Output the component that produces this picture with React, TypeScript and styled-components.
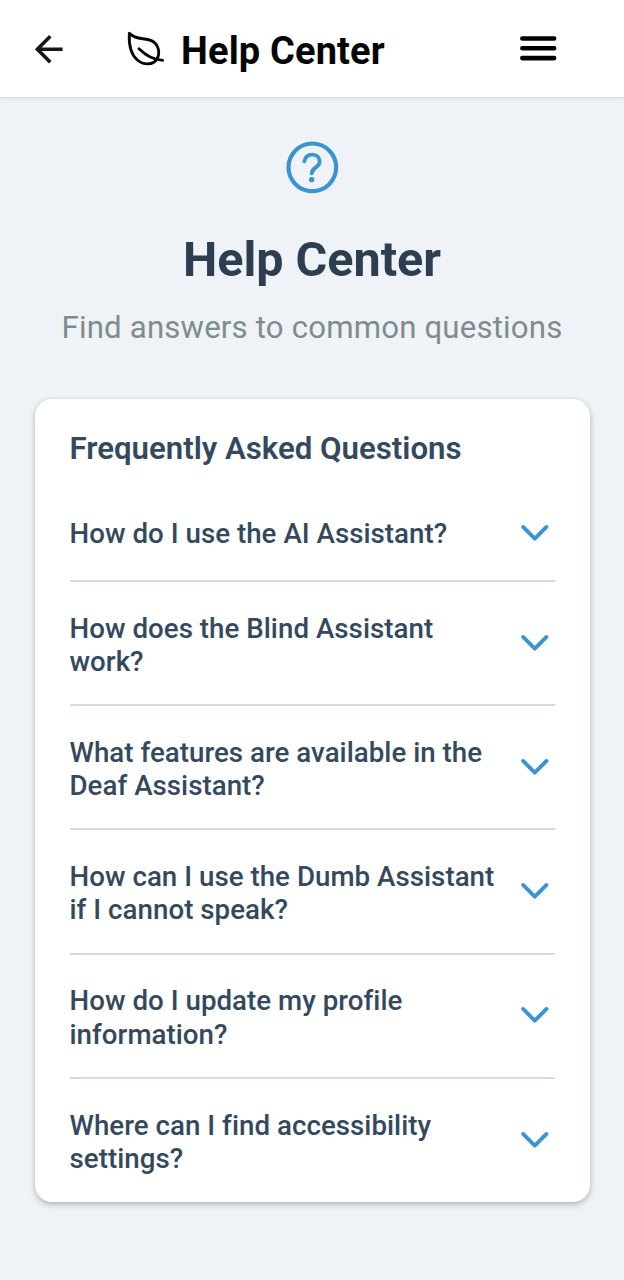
import React from "react";
import styled, { createGlobalStyle } from "styled-components";
import { IoChevronDown, IoMenu } from "react-icons/io5";

const GlobalStyle = createGlobalStyle`
  * { box-sizing: border-box; }
  body {
    margin: 0;
    background: #eff3f8;
    font-family: Roboto, "Liberation Sans", sans-serif;
  }
  h1, h2, p { margin: 0; }
  button { border: 0; padding: 0; background: none; font: inherit; color: inherit; }
  svg { display: block; flex: none; }
`;

const Screen = styled.div`
  min-height: 1280px;
  display: flex;
  flex-direction: column;
`;

const TopBar = styled.header`
  height: 97px;
  padding: 0 62px 0 28px;
  display: flex;
  align-items: center;
  background: #fff;
  box-shadow: 0 1px 1px #d9dbe1, 0 2px 5px rgba(0, 0, 0, 0.07);
`;

const IconButton = styled.button`
  display: flex;
`;

const Brand = styled.div`
  flex: 1;
  display: flex;
  align-items: center;
  gap: 11px;
  margin-left: 52px;
  color: #050505;
`;

const BrandName = styled.span`
  font-size: 38px;
  font-weight: 700;
  line-height: 46px;
  padding-top: 4px;
  letter-spacing: 0.15px;
  white-space: nowrap;
`;

const Intro = styled.section`
  display: flex;
  flex-direction: column;
  align-items: center;
  padding-top: 43px;
`;

const Title = styled.h1`
  margin-top: 35.3px;
  font-size: 48.5px;
  line-height: 58px;
  font-weight: 700;
  color: #2c3e50;
`;

const Subtitle = styled.p`
  margin-top: 20px;
  font-size: 31.2px;
  line-height: 37px;
  letter-spacing: 0.17px;
  color: #7f8c8d;
  white-space: nowrap;
`;

const Card = styled.main`
  margin: 53px 34px 0 35px;
  height: 803px;
  padding: 31px 35px 0 34.5px;
  border-radius: 17px;
  background: #fff;
  box-shadow: 0 3px 6px rgba(0, 0, 0, 0.22), 0 0 4px rgba(0, 0, 0, 0.08);
`;

const CardTitle = styled.h2`
  margin-bottom: 19.6px;
  font-size: 31.2px;
  line-height: 37px;
  font-weight: 600;
  color: #34495e;
`;

const Row = styled.button`
  width: 100%;
  display: flex;
  align-items: center;
  justify-content: space-between;
  padding: 29.8px 0 26px;
  text-align: left;
  border-bottom: 2px solid #d5dcdf;

  &:last-child { border-bottom: 0; }
`;

const Question = styled.span`
  align-self: flex-start;
  font-size: 27.7px;
  line-height: 33.2px;
  letter-spacing: 0.03px;
  font-weight: 500;
  color: #34495e;
  white-space: pre-line;
`;

const Chevron = styled(IoChevronDown)`
  margin: -4.6px -0.5px 0.4px 0;
  color: #3a94d0;
`;

const questions = [
  "How do I use the AI Assistant?",
  "How does the Blind Assistant\nwork?",
  "What features are available in the\nDeaf Assistant?",
  "How can I use the Dumb Assistant\nif I cannot speak?",
  "How do I update my profile\ninformation?",
  "Where can I find accessibility\nsettings?",
];

const BackArrow = () => (
  <svg width="42" height="42" viewBox="0 0 42 42" fill="none" stroke="#161618" strokeWidth="3.6">
    <path d="M22.3 8.2L9.4 21.2L22.3 34.2M9.4 21.2H34.6" />
  </svg>
);

const Leaf = () => (
  <svg
    width="48"
    height="44"
    viewBox="0 0 144 132"
    fill="none"
    stroke="currentColor"
    strokeWidth="8.6"
    strokeLinecap="round"
    strokeLinejoin="round"
  >
    <path d="M22 19C20 52 27 82 46 99C64 115 94 115 105 96C116 76 109 51 88 41C66 31 42 41 22 19Z" />
    <path d="M51 65C73 86 91 97 122 100" />
  </svg>
);

const HelpIcon = () => (
  <svg width="56" height="56" viewBox="0 0 168 168" fill="none" stroke="#3a94d0" strokeLinecap="round">
    <circle cx="85" cy="82" r="71.5" strokeWidth="12.5" />
    <path
      d="M61 64C64 50 73 44 85 44C98 44 107 53 107 65C107 82 84 82 83 100"
      strokeWidth="11.5"
    />
    <circle cx="83" cy="119" r="8" fill="#3a94d0" stroke="none" />
  </svg>
);

export default function App() {
  return (
    <Screen>
      <GlobalStyle />
      <TopBar>
        <IconButton aria-label="Back"><BackArrow /></IconButton>
        <Brand>
          <Leaf />
          <BrandName>Help Center</BrandName>
        </Brand>
        <IconButton aria-label="Menu"><IoMenu size={48.5} color="#000" /></IconButton>
      </TopBar>
      <Intro>
        <HelpIcon />
        <Title>Help Center</Title>
        <Subtitle>Find answers to common questions</Subtitle>
      </Intro>
      <Card>
        <CardTitle>Frequently Asked Questions</CardTitle>
        {questions.map((question) => (
          <Row key={question}>
            <Question>{question}</Question>
            <Chevron size={41.6} />
          </Row>
        ))}
      </Card>
    </Screen>
  );
}
